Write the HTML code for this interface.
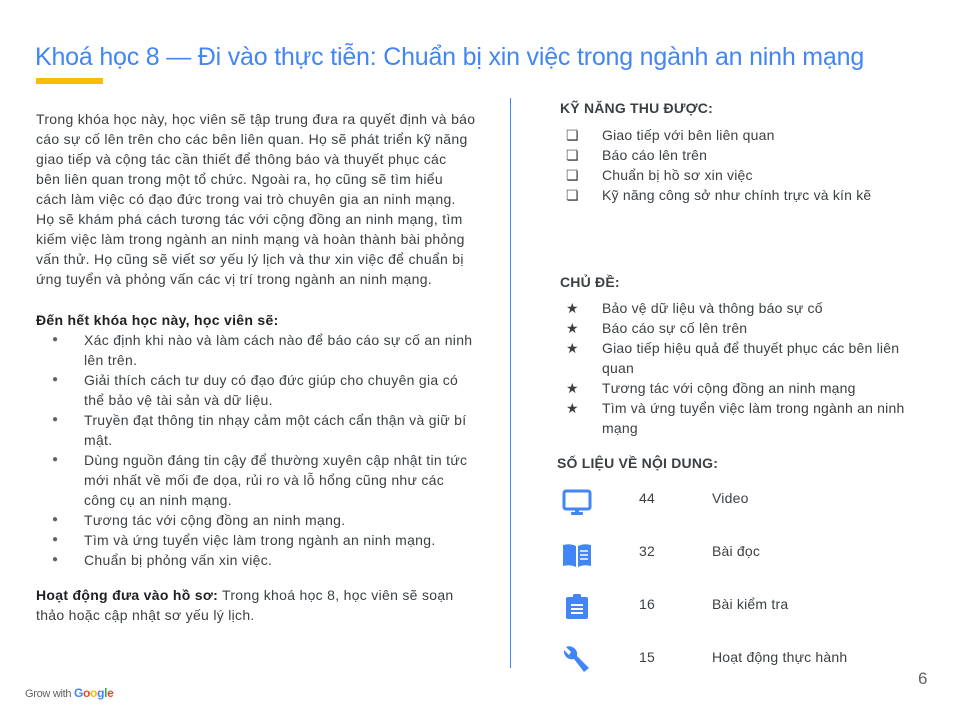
<!DOCTYPE html>
<html><head><meta charset="utf-8"><style>
body{margin:0;width:960px;height:720px;background:#fff;position:relative;overflow:hidden;font-family:"Liberation Sans",sans-serif;color:#3c4043}
.a{position:absolute;white-space:nowrap}
p{margin:0}
.t{font-size:14px;line-height:20px;color:#3c4043;letter-spacing:0.3px;white-space:nowrap}
h1{position:absolute;left:35px;top:43px;margin:0;font-weight:normal;font-size:25px;color:#4285f4;white-space:nowrap;letter-spacing:-0.2px}
.h{font-size:13px;font-weight:bold;color:#202124}
ul{margin:0;padding:0;list-style:none}
li{position:relative;padding-left:48px}
li:before{content:"●";position:absolute;left:16px;font-size:10px;color:#5f6368}
.r div{position:absolute;font-size:14px;color:#3c4043;white-space:nowrap;letter-spacing:0.2px}
</style></head><body>
<h1>Khoá học 8 — Đi vào thực tiễn: Chuẩn bị xin việc trong ngành an ninh mạng</h1>
<div class="a" style="left:36px;top:78px;width:67px;height:6px;background:#fbbc04"></div>
<div class="a t" style="left:36px;top:109px;width:441px">
<p>Trong khóa học này, học viên sẽ tập trung đưa ra quyết định và báo<br>cáo sự cố lên trên cho các bên liên quan. Họ sẽ phát triển kỹ năng<br>giao tiếp và cộng tác cần thiết để thông báo và thuyết phục các<br>bên liên quan trong một tổ chức. Ngoài ra, họ cũng sẽ tìm hiểu<br>cách làm việc có đạo đức trong vai trò chuyên gia an ninh mạng.<br>Họ sẽ khám phá cách tương tác với cộng đồng an ninh mạng, tìm<br>kiếm việc làm trong ngành an ninh mạng và hoàn thành bài phỏng<br>vấn thử. Họ cũng sẽ viết sơ yếu lý lịch và thư xin việc để chuẩn bị<br>ứng tuyển và phỏng vấn các vị trí trong ngành an ninh mạng.</p>
<p style="margin-top:21px;font-weight:bold;color:#202124">Đến hết khóa học này, học viên sẽ:</p>
<ul>
<li>Xác định khi nào và làm cách nào để báo cáo sự cố an ninh<br>lên trên.</li>
<li>Giải thích cách tư duy có đạo đức giúp cho chuyên gia có<br>thể bảo vệ tài sản và dữ liệu.</li>
<li>Truyền đạt thông tin nhạy cảm một cách cẩn thận và giữ bí<br>mật.</li>
<li>Dùng nguồn đáng tin cậy để thường xuyên cập nhật tin tức<br>mới nhất về mối đe dọa, rủi ro và lỗ hổng cũng như các<br>công cụ an ninh mạng.</li>
<li>Tương tác với cộng đồng an ninh mạng.</li>
<li>Tìm và ứng tuyển việc làm trong ngành an ninh mạng.</li>
<li>Chuẩn bị phỏng vấn xin việc.</li>
</ul>
<p style="margin-top:15px"><b style="color:#202124">Hoạt động đưa vào hồ sơ:</b> Trong khoá học 8, học viên sẽ soạn<br>thảo hoặc cập nhật sơ yếu lý lịch.</p>
</div>
<div class="a" style="left:510px;top:98px;width:1px;height:570px;background:#4285f4"></div>
<div class="r">
<div class="h" style="left:560px;top:100px">KỸ NĂNG THU ĐƯỢC:</div>
<div style="left:566px;top:127px">❏</div><div style="left:602px;top:127px">Giao tiếp với bên liên quan</div>
<div style="left:566px;top:147px">❏</div><div style="left:602px;top:147px">Báo cáo lên trên</div>
<div style="left:566px;top:167px">❏</div><div style="left:602px;top:167px">Chuẩn bị hồ sơ xin việc</div>
<div style="left:566px;top:187px">❏</div><div style="left:602px;top:187px">Kỹ năng công sở như chính trực và kín kẽ</div>
<div class="h" style="left:560px;top:274px">CHỦ ĐỀ:</div>
<div style="left:566px;top:300px">★</div><div style="left:602px;top:300px">Bảo vệ dữ liệu và thông báo sự cố</div>
<div style="left:566px;top:320px">★</div><div style="left:602px;top:320px">Báo cáo sự cố lên trên</div>
<div style="left:566px;top:340px">★</div><div style="left:602px;top:340px;line-height:20px;margin-top:-2px">Giao tiếp hiệu quả để thuyết phục các bên liên<br>quan</div>
<div style="left:566px;top:380px">★</div><div style="left:602px;top:380px">Tương tác với cộng đồng an ninh mạng</div>
<div style="left:566px;top:400px">★</div><div style="left:602px;top:400px;line-height:20px;margin-top:-2px">Tìm và ứng tuyển việc làm trong ngành an ninh<br>mạng</div>
<div class="h" style="left:557px;top:455px">SỐ LIỆU VỀ NỘI DUNG:</div>
<div style="left:639px;top:490px">44</div><div style="left:712px;top:490px">Video</div>
<div style="left:639px;top:543px">32</div><div style="left:712px;top:543px">Bài đọc</div>
<div style="left:639px;top:596px">16</div><div style="left:712px;top:596px">Bài kiểm tra</div>
<div style="left:639px;top:649px">15</div><div style="left:712px;top:649px">Hoạt động thực hành</div>
</div>
<svg class="a" style="left:562px;top:489px" width="30" height="28" viewBox="0 0 30 28"><rect x="2" y="2" width="26" height="18" rx="2" fill="none" stroke="#4285f4" stroke-width="3"/><rect x="13" y="20" width="4" height="4" fill="#4285f4"/><rect x="9" y="23" width="12" height="3" rx="1" fill="#4285f4"/></svg>
<svg class="a" style="left:562px;top:542px" width="30" height="26" viewBox="0 0 30 26"><path d="M1 3 Q8 1 14 4 V25 Q8 22 1 24Z M16 4 Q22 1 29 3 V24 Q22 22 16 25Z" fill="#4285f4"/><path d="M18 9h8M18 13h8M18 17h8" stroke="#fff" stroke-width="1.5"/></svg>
<svg class="a" style="left:565px;top:593px" width="24" height="27" viewBox="0 0 24 27"><rect x="1" y="4" width="22" height="22" rx="2" fill="#4285f4"/><rect x="8" y="1" width="8" height="6" rx="1.5" fill="#4285f4"/><path d="M6 12h12M6 16h12M6 20h12" stroke="#fff" stroke-width="2"/></svg>
<svg class="a" style="left:563px;top:645px" width="28" height="28" viewBox="0 0 28 28"><path d="M3 2 L8 7 L6 10 L1 5 A8 8 0 0 0 11 14 L21 27 L26 23 L14 11 A8 8 0 0 0 3 2Z" fill="#4285f4"/></svg>
<div class="a" style="left:918px;top:669px;font-size:17px;color:#5f6368">6</div>
<div class="a" style="left:25px;top:686px;font-size:11px;color:#5f6368;letter-spacing:-0.3px">Grow with <span style="font-weight:bold;font-size:12px"><span style="color:#4285f4">G</span><span style="color:#ea4335">o</span><span style="color:#fbbc04">o</span><span style="color:#4285f4">g</span><span style="color:#34a853">l</span><span style="color:#ea4335">e</span></span></div>
</body></html>
